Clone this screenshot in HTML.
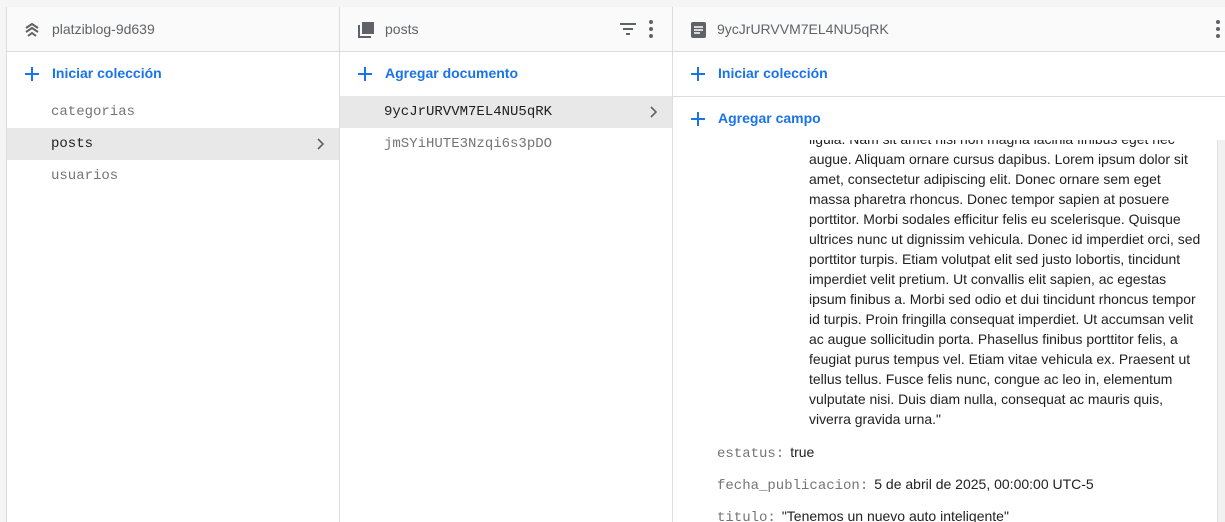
<html><head><style>
body{margin:0;width:1225px;height:522px;overflow:hidden;background:#f5f5f5;font-family:"Liberation Sans",sans-serif;position:relative}
.p{position:absolute;top:7px;bottom:0;background:#fff;border-left:1px solid #dadce0;overflow:hidden}
.h{position:absolute;left:0;right:0;top:0;height:44px;background:#fafafa;border-bottom:1px solid #dadce0;font-size:14px;color:#5f6368}
.h span{position:absolute;top:14px}
.act{position:absolute;left:18px;font-size:14px;font-weight:bold;color:#1a73e8}
.act svg{position:absolute;left:0;top:1px}
.act span{position:absolute;left:27px;white-space:nowrap;top:-1px}
.it{position:absolute;left:0;right:0;height:32px;font-family:"Liberation Mono",monospace;font-size:14px;color:#757575}
.it span{position:absolute;left:44px;top:8px}
.sel{background:#e8e8e8;color:#212121}
.chev{position:absolute;right:15px;top:10px}
.lor{position:absolute;left:136px;top:142px;font-size:13.95px;line-height:20px;color:#212121;white-space:nowrap}
.f{position:absolute;left:44px;font-size:14px;color:#212121;white-space:nowrap}
.f i{font-style:normal;font-family:"Liberation Mono",monospace;color:#757575;margin-right:6px}
</style></head><body>
<div class="p" style="left:6px;width:333px">
 <div class="h"><svg style="position:absolute;left:17px;top:15px" width="16" height="16" viewBox="0 0 16 16"><path d="M2 6l6-4 6 4M2 10l6-4 6 4M4 14l4-3 4 3" fill="none" stroke="#5f6368" stroke-width="2"/></svg><span style="left:45px">platziblog-9d639</span></div>
 <div class="act" style="top:59px"><svg width="14" height="14"><path d="M7 0v14M0 7h14" stroke="#1a73e8" stroke-width="2"/></svg><span>Iniciar colección</span></div>
 <div class="it" style="top:89px"><span>categorias</span></div>
 <div class="it sel" style="top:121px"><span>posts</span><svg class="chev" width="8" height="12"><path d="M1 1l5 5-5 5" fill="none" stroke="#5f6368" stroke-width="1.6"/></svg></div>
 <div class="it" style="top:153px"><span>usuarios</span></div>
</div>
<div class="p" style="left:339px;width:333px">
 <div class="h"><svg style="position:absolute;left:17px;top:14px" width="18" height="18" viewBox="0 0 18 18"><rect x="1" y="4" width="2" height="13" fill="#5f6368"/><rect x="1" y="15" width="13" height="2" fill="#5f6368"/><rect x="5" y="1" width="12" height="12" fill="#5f6368"/></svg><span style="left:45px">posts</span>
 <svg style="position:absolute;left:279px;top:14px" width="18" height="16"><path d="M1 3h16M4 8h10M7 13h4" stroke="#5f6368" stroke-width="2"/></svg>
 <svg style="position:absolute;left:308px;top:12px" width="6" height="20"><circle cx="3" cy="3" r="2" fill="#5f6368"/><circle cx="3" cy="10" r="2" fill="#5f6368"/><circle cx="3" cy="17" r="2" fill="#5f6368"/></svg></div>
 <div class="act" style="top:59px"><svg width="14" height="14"><path d="M7 0v14M0 7h14" stroke="#1a73e8" stroke-width="2"/></svg><span>Agregar documento</span></div>
 <div class="it sel" style="top:89px"><span>9ycJrURVVM7EL4NU5qRK</span><svg class="chev" width="8" height="12"><path d="M1 1l5 5-5 5" fill="none" stroke="#5f6368" stroke-width="1.6"/></svg></div>
 <div class="it" style="top:121px"><span>jmSYiHUTE3Nzqi6s3pDO</span></div>
</div>
<div class="p" style="left:672px;right:0">
 <div class="h"><svg style="position:absolute;left:18px;top:15px" width="15" height="16"><rect x="0" y="0" width="15" height="16" rx="2" fill="#5f6368"/><path d="M3 5h9M3 8h9M3 11h6" stroke="#fff" stroke-width="1.5"/></svg><span style="left:44px">9ycJrURVVM7EL4NU5qRK</span>
 <svg style="position:absolute;left:542px;top:12px" width="6" height="20"><circle cx="3" cy="3" r="2" fill="#5f6368"/><circle cx="3" cy="10" r="2" fill="#5f6368"/><circle cx="3" cy="17" r="2" fill="#5f6368"/></svg></div>
 <div class="act" style="top:59px"><svg width="14" height="14"><path d="M7 0v14M0 7h14" stroke="#1a73e8" stroke-width="2"/></svg><span>Iniciar colección</span></div>
 <div class="lor" style="top:122px">ligula. Nam sit amet nisi non magna lacinia finibus eget nec</div>
 <div class="lor">augue. Aliquam ornare cursus dapibus. Lorem ipsum dolor sit<br>amet, consectetur adipiscing elit. Donec ornare sem eget<br>massa pharetra rhoncus. Donec tempor sapien at posuere<br>porttitor. Morbi sodales efficitur felis eu scelerisque. Quisque<br>ultrices nunc ut dignissim vehicula. Donec id imperdiet orci, sed<br>porttitor turpis. Etiam volutpat elit sed justo lobortis, tincidunt<br>imperdiet velit pretium. Ut convallis elit sapien, ac egestas<br>ipsum finibus a. Morbi sed odio et dui tincidunt rhoncus tempor<br>id turpis. Proin fringilla consequat imperdiet. Ut accumsan velit<br>ac augue sollicitudin porta. Phasellus finibus porttitor felis, a<br>feugiat purus tempus vel. Etiam vitae vehicula ex. Praesent ut<br>tellus tellus. Fusce felis nunc, congue ac leo in, elementum<br>vulputate nisi. Duis diam nulla, consequat ac mauris quis,<br>viverra gravida urna."</div>
 <div style="position:absolute;left:0;right:0;top:89px;height:43px;background:#fff;border-top:1px solid #dadce0"></div>
 <div class="act" style="top:104px"><svg width="14" height="14"><path d="M7 0v14M0 7h14" stroke="#1a73e8" stroke-width="2"/></svg><span>Agregar campo</span></div>
 <div class="f" style="top:437px"><i>estatus:</i>true</div>
 <div class="f" style="top:469px"><i>fecha_publicacion:</i>5 de abril de 2025, 00:00:00 UTC-5</div>
 <div class="f" style="top:501px"><i>titulo:</i>"Tenemos un nuevo auto inteligente"</div>
 <div style="position:absolute;right:0;top:133px;width:7px;bottom:0;background:#f1f1f1;border-left:1px solid #e0e0e0"></div>
</div>
</body></html>
